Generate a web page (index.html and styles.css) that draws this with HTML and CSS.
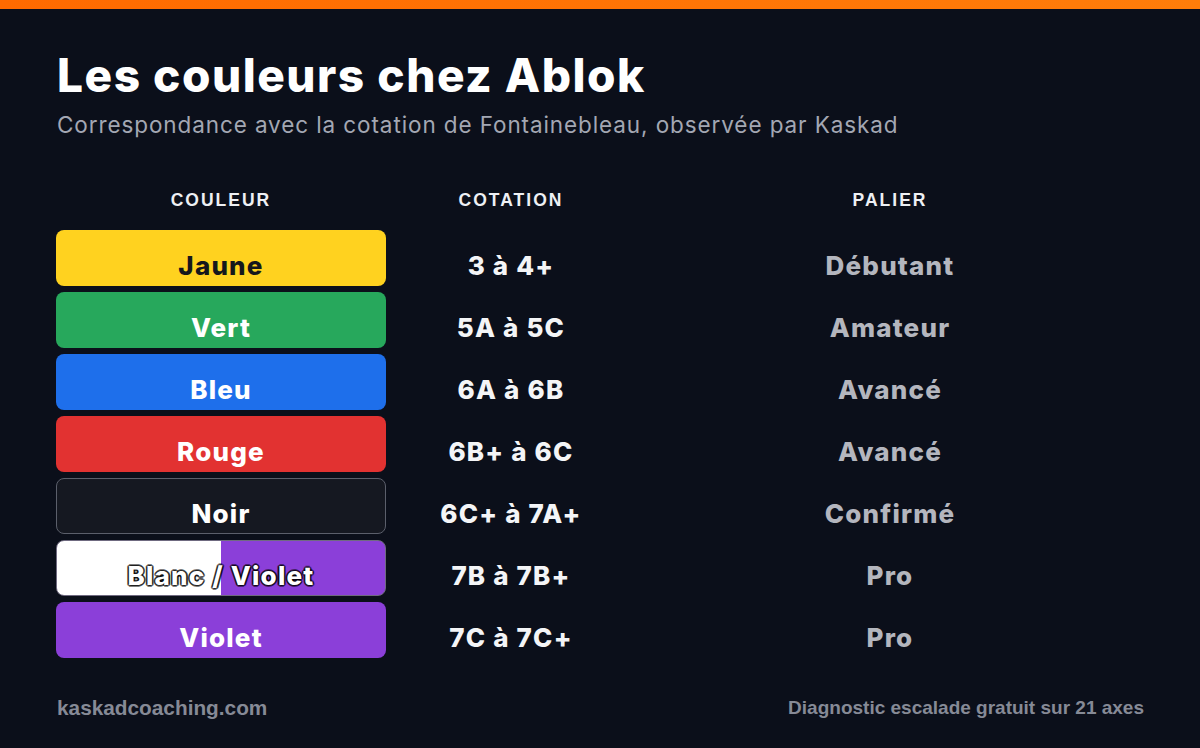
FILE: index.html
```html
<!DOCTYPE html>
<html lang="fr">
<head>
<meta charset="utf-8">
<title>Les couleurs chez Ablok</title>
<link rel="stylesheet" href="styles.css">
</head>
<body>
<div class="topbar"></div>
<main class="page">
  <header class="head">
    <h1 class="title">Les couleurs chez Ablok</h1>
    <p class="subtitle">Correspondance avec la cotation de Fontainebleau, observée par Kaskad</p>
  </header>
  <section class="table">
    <div class="th">COULEUR</div>
    <div class="th">COTATION</div>
    <div class="th">PALIER</div>

    <div class="pill jaune">Jaune</div>
    <div class="grade">3 à 4+</div>
    <div class="level">Débutant</div>

    <div class="pill vert">Vert</div>
    <div class="grade">5A à 5C</div>
    <div class="level">Amateur</div>

    <div class="pill bleu">Bleu</div>
    <div class="grade">6A à 6B</div>
    <div class="level">Avancé</div>

    <div class="pill rouge">Rouge</div>
    <div class="grade">6B+ à 6C</div>
    <div class="level">Avancé</div>

    <div class="pill noir">Noir</div>
    <div class="grade">6C+ à 7A+</div>
    <div class="level">Confirmé</div>

    <div class="pill blancviolet"><span class="outlined">Blanc / Violet</span></div>
    <div class="grade">7B à 7B+</div>
    <div class="level">Pro</div>

    <div class="pill violet">Violet</div>
    <div class="grade">7C à 7C+</div>
    <div class="level">Pro</div>
  </section>
  <footer class="foot">
    <span class="site">kaskadcoaching.com</span>
    <span class="cta">Diagnostic escalade gratuit sur 21 axes</span>
  </footer>
</main>
</body>
</html>
```
FILE: styles.css
```css
* { box-sizing: border-box; }
html, body { margin: 0; padding: 0; }
body {
  width: 1200px;
  height: 748px;
  background: #0b0f1a;
  color: #fff;
  font-family: Inter, "Noto Sans", sans-serif;
  overflow: hidden;
}
.topbar {
  height: 9px;
  background: linear-gradient(90deg, #ff6a00, #ff7d0a);
}
.page {
  padding: 0 56px;
  display: flex;
  flex-direction: column;
  height: 739px;
}
.head { padding-top: 39px; }
.title {
  margin: 0 0 0 1px;
  font-size: 46px;
  font-weight: 800;
  line-height: 54px;
  letter-spacing: 1.5px;
}
.subtitle {
  margin: 9px 0 0 1px;
  font-size: 22.5px;
  line-height: 28px;
  color: #a3a7b3;
  font-weight: 400;
  letter-spacing: 0.9px;
}
.table {
  margin-top: 47px;
  display: grid;
  grid-template-columns: 330px 250px 1fr;
  grid-auto-rows: 56px;
  grid-template-rows: 38px;
  row-gap: 6px;
}
.th {
  font-family: "Liberation Sans", Arial, sans-serif;
  font-weight: 700;
  font-size: 17.5px;
  letter-spacing: 2px;
  color: #eef0f4;
  display: flex;
  align-items: center;
  justify-content: center;
  padding-bottom: 10px;
}
.table .th { height: 38px; }
.pill, .grade, .level {
  display: flex;
  align-items: center;
  justify-content: center;
  font-weight: 800;
  font-size: 26px;
  letter-spacing: 1.2px;
  padding-top: 14px;
}
.pill {
  border-radius: 8px;
  color: #fff;
}
.grade { color: #f4f5f7; }
.level { color: #b4b6be; }
.jaune { background: #ffd21f; color: #15171c; }
.vert { background: #27a85c; }
.bleu { background: #1e6feb; }
.rouge { background: #e23231; }
.noir { background: #151821; border: 1px solid #5b5f6b; }
.blancviolet {
  background: linear-gradient(90deg, #ffffff 50%, #8b3fd9 50%);
  border: 1px solid #6f6a80;
}
.violet { background: #8b3fd9; }
.outlined {
  color: #fff;
  text-shadow:
    -1.3px -1.3px 0 rgba(0,0,0,0.5),
     1.3px -1.3px 0 rgba(0,0,0,0.5),
    -1.3px  1.3px 0 rgba(0,0,0,0.5),
     1.3px  1.3px 0 rgba(0,0,0,0.5),
     0 1.8px 0 rgba(0,0,0,0.5),
     0 -1.8px 0 rgba(0,0,0,0.5),
     1.8px 0 0 rgba(0,0,0,0.5),
    -1.8px 0 0 rgba(0,0,0,0.5);
}
.foot {
  margin-top: auto;
  margin-bottom: 28px;
  display: flex;
  justify-content: space-between;
  align-items: center;
  font-family: "Liberation Sans", Arial, sans-serif;
  font-weight: 700;
  color: #868a96;
}
.site { font-size: 20.8px; margin-left: 1px; }
.cta { font-size: 19px; }
```
